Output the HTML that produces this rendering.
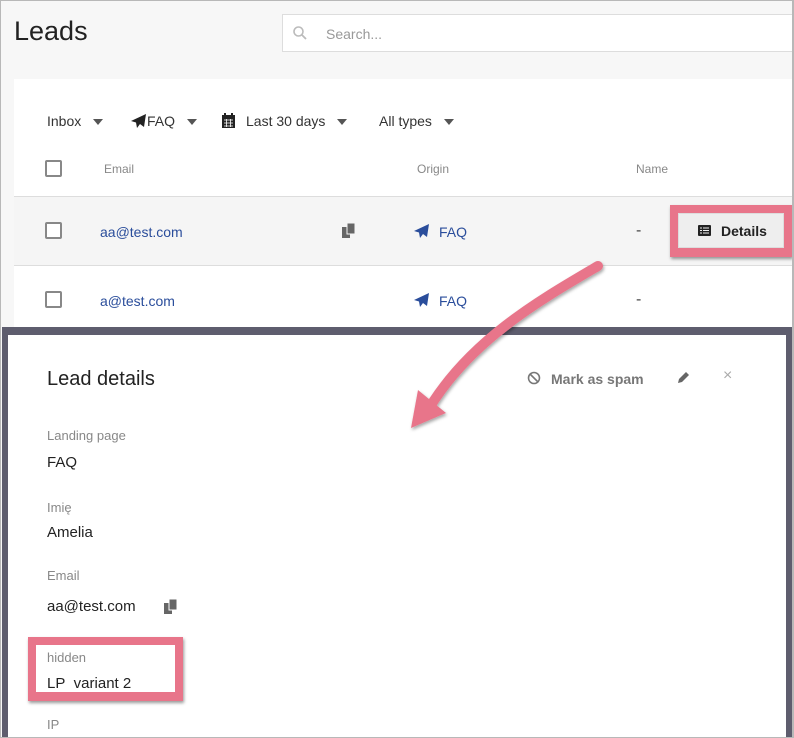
<!DOCTYPE html>
<html><head><meta charset="utf-8"><style>
*{box-sizing:border-box;margin:0;padding:0}
body{width:794px;height:738px;overflow:hidden;background:#f7f7f7;font-family:"Liberation Sans",sans-serif;position:relative;color:#222}
.abs{position:absolute}
.frame{position:absolute;left:0;top:0;width:794px;height:738px;border:1px solid #b8b8b8;border-right:2px solid #b8b8b8;pointer-events:none}
.search{left:282px;top:14px;width:520px;height:38px;background:#fff;border:1px solid #ddd}
.panel{left:14px;top:79px;width:790px;height:250px;background:#fff}
.f{font-size:14px;color:#333;top:113px}
.tri{display:inline-block;width:0;height:0;border-left:5px solid transparent;border-right:5px solid transparent;border-top:6px solid #555;vertical-align:middle;margin-left:12px}
.cb{width:17px;height:17px;border:2px solid #888;border-radius:2px;background:#fff}
.th{font-size:12px;color:#888;top:162px}
.lnk{color:#2a4d9b;font-size:14px}
.modal{left:2px;top:327px;width:790px;height:411px;background:#5e5d6e}
.mi{left:8px;top:335px;width:778px;height:403px;background:#fff}
.lab{font-size:13px;color:#888;left:47px}
.val{font-size:15px;color:#222;left:47px}
</style></head><body>
<div class="abs" style="left:14px;top:16px;font-size:27px;color:#222">Leads</div>
<div class="abs search"></div>
<svg class="abs" style="left:292px;top:25px" width="16" height="16" viewBox="0 0 16 16"><circle cx="6.5" cy="6.5" r="4.5" fill="none" stroke="#bbb" stroke-width="1.6"/><path d="M10 10l4 4" stroke="#bbb" stroke-width="1.8"/></svg>
<div class="abs" style="left:326px;top:26px;font-size:14px;color:#999">Search...</div>
<div class="abs panel"></div>
<div class="abs f" style="left:47px">Inbox<span class="tri"></span></div>
<svg class="abs" style="left:131px;top:114px" width="16" height="14" viewBox="0 0 16 14"><path d="M15 0L0 7l5 1.5L6 14l3-4 4 3z" fill="#222"/></svg>
<div class="abs f" style="left:147px">FAQ<span class="tri"></span></div>
<svg class="abs" style="left:222px;top:113px" width="13" height="15" viewBox="0 0 13 15"><rect x="0" y="2" width="13" height="13" fill="#222"/><rect x="2" y="0" width="2" height="3" fill="#222"/><rect x="9" y="0" width="2" height="3" fill="#222"/><path d="M2 7h9M2 10h9M2 13h9M4.5 6v8M8.5 6v8" stroke="#fff" stroke-width=".8"/></svg>
<div class="abs f" style="left:246px">Last 30 days<span class="tri"></span></div>
<div class="abs f" style="left:379px">All types<span class="tri"></span></div>
<div class="abs cb" style="left:45px;top:160px"></div>
<div class="abs th" style="left:104px">Email</div>
<div class="abs th" style="left:417px">Origin</div>
<div class="abs th" style="left:636px">Name</div>
<div class="abs" style="left:14px;top:196px;width:780px;height:70px;background:#f5f5f5;border-top:1px solid #ddd;border-bottom:1px solid #ddd"></div>
<div class="abs cb" style="left:45px;top:222px"></div>
<div class="abs lnk" style="left:100px;top:224px">aa@test.com</div>
<svg class="abs" style="left:342px;top:223px" width="14" height="16" viewBox="0 0 14 16"><rect x="0" y="4" width="8" height="11" fill="#666"/><rect x="5" y="0" width="8" height="11" fill="#666" stroke="#f5f5f5" stroke-width="1"/></svg>
<svg class="abs" style="left:414px;top:224px" width="15" height="14" viewBox="0 0 15 14"><path d="M15 0L0 7l5 1.5L6 14l3-4 4 3z" fill="#2a4d9b"/></svg>
<div class="abs lnk" style="left:439px;top:224px">FAQ</div>
<div class="abs" style="left:636px;top:222px;color:#444">-</div>
<div class="abs" style="left:670px;top:205px;width:122px;height:52px;background:#e8758a;box-shadow:1px 2px 3px rgba(0,0,0,.4)"></div>
<div class="abs" style="left:678px;top:213px;width:106px;height:35px;background:#eee;border:1px solid #ddd"></div>
<svg class="abs" style="left:698px;top:225px" width="13" height="11" viewBox="0 0 13 11"><rect width="13" height="11" rx="1" fill="#222"/><path d="M2 3h2M5 3h6M2 5.5h2M5 5.5h6M2 8h2M5 8h6" stroke="#eee" stroke-width="1"/></svg>
<div class="abs" style="left:721px;top:223px;font-size:14px;font-weight:bold;color:#222">Details</div>
<div class="abs cb" style="left:45px;top:291px"></div>
<div class="abs lnk" style="left:100px;top:293px">a@test.com</div>
<svg class="abs" style="left:414px;top:293px" width="15" height="14" viewBox="0 0 15 14"><path d="M15 0L0 7l5 1.5L6 14l3-4 4 3z" fill="#2a4d9b"/></svg>
<div class="abs lnk" style="left:439px;top:293px">FAQ</div>
<div class="abs" style="left:636px;top:291px;color:#444">-</div>
<div class="abs modal"></div>
<div class="abs mi"></div>
<div class="abs" style="left:47px;top:368px;font-size:20px;color:#222">Lead details</div>
<svg class="abs" style="left:527px;top:371px" width="14" height="14" viewBox="0 0 14 14"><circle cx="7" cy="7" r="5.5" fill="none" stroke="#777" stroke-width="1.6"/><path d="M3 3l8 8" stroke="#777" stroke-width="1.6"/></svg>
<div class="abs" style="left:551px;top:371px;font-size:14px;color:#777;font-weight:bold">Mark as spam</div>
<svg class="abs" style="left:676px;top:371px" width="14" height="14" viewBox="0 0 14 14"><path d="M2 12l1-4 7-7 3 3-7 7z" fill="#666"/></svg>
<div class="abs" style="left:723px;top:367px;font-size:16px;color:#aaa">×</div>
<div class="abs lab" style="top:428px">Landing page</div>
<div class="abs val" style="top:454px">FAQ</div>
<div class="abs lab" style="top:500px">Imię</div>
<div class="abs val" style="top:524px">Amelia</div>
<div class="abs lab" style="top:568px">Email</div>
<div class="abs val" style="top:598px">aa@test.com</div>
<svg class="abs" style="left:164px;top:599px" width="14" height="16" viewBox="0 0 14 16"><rect x="0" y="4" width="8" height="11" fill="#666"/><rect x="5" y="0" width="8" height="11" fill="#666" stroke="#fff" stroke-width="1"/></svg>
<div class="abs" style="left:28px;top:637px;width:155px;height:64px;background:#e8758a;box-shadow:1px 2px 3px rgba(0,0,0,.4)"></div>
<div class="abs" style="left:36px;top:645px;width:139px;height:47px;background:#fff"></div>
<div class="abs lab" style="top:650px">hidden</div>
<div class="abs val" style="top:675px">LP&nbsp; variant 2</div>
<div class="abs lab" style="top:717px">IP</div>
<svg class="abs" style="left:0;top:0" width="794" height="738" viewBox="0 0 794 738">
<defs><filter id="s"><feDropShadow dx="1" dy="2" stdDeviation="1.5" flood-opacity=".35"/></filter></defs>
<g filter="url(#s)">
<path d="M598 266C540 300 470 340 428 410" fill="none" stroke="#e8758a" stroke-width="10" stroke-linecap="round"/>
<path d="M418 390L411 428L446 413Z" fill="#e8758a"/>
</g></svg>
<div class="frame"></div>
</body></html>
